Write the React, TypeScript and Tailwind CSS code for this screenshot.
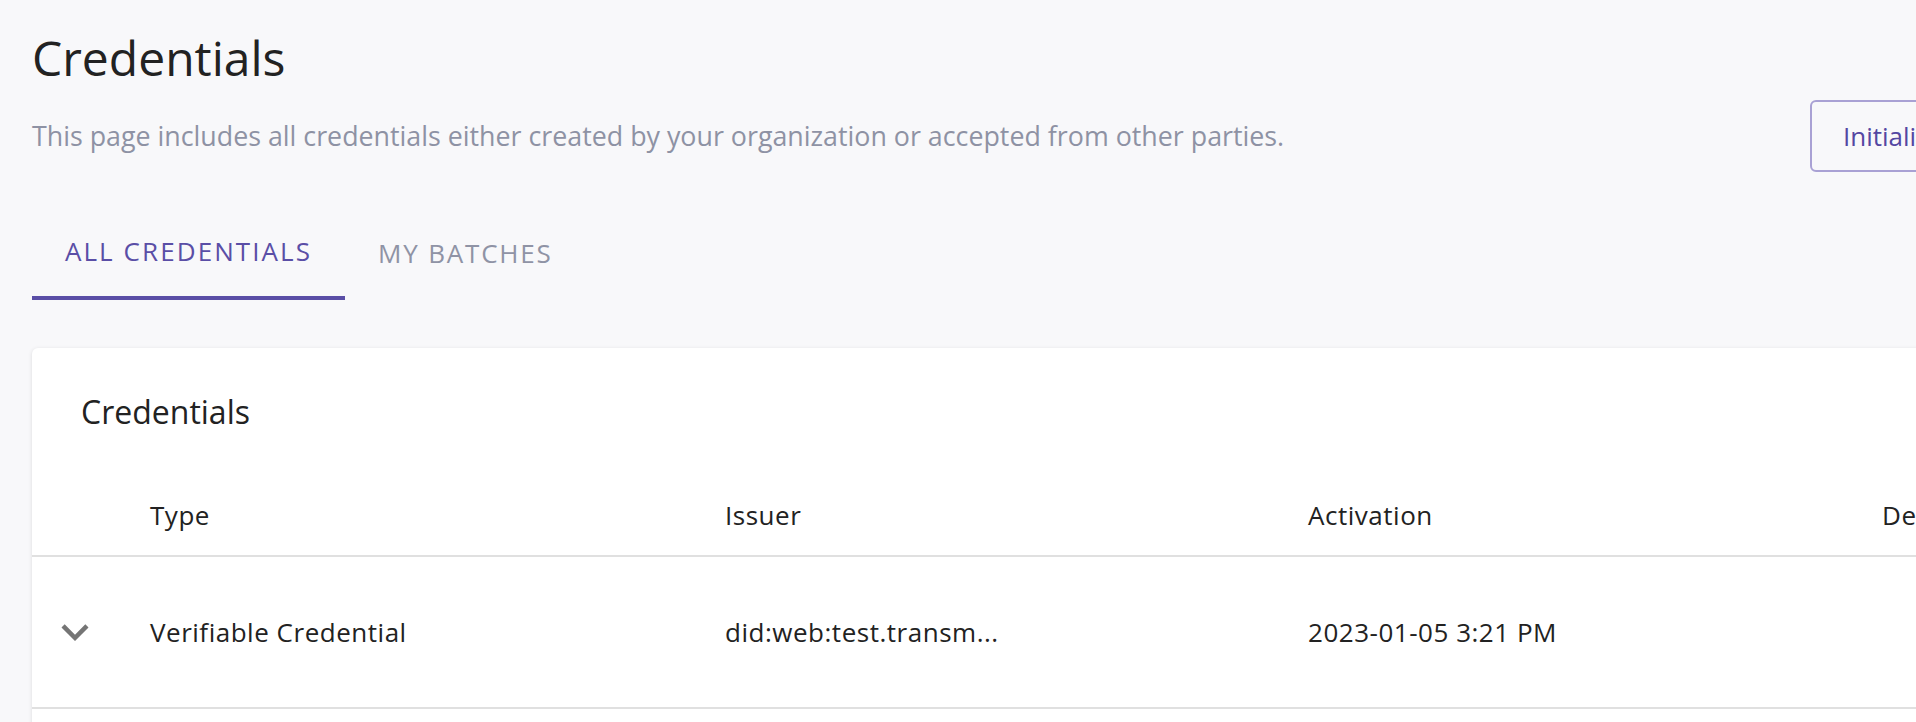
export default function App() {
  const font = { fontFamily: "'Open Sans', 'Noto Sans', sans-serif" };
  return (
    <div className="w-full h-[722px] overflow-hidden bg-[#f8f8fa]" style={font}>
      <div className="w-[2140px] px-[32px]">
        {/* Page header */}
        <h1 className="pt-[30px] h-[86px] text-[48px] leading-[56px] font-normal text-[#222222]">Credentials</h1>
        <div className="mt-[14px] h-[72px] flex items-center">
          <p className="text-[26.8px] leading-[32px] text-[#8e92a4]">
            This page includes all credentials either created by your organization or accepted from other parties.
          </p>
          <button className="ml-auto h-[72px] w-[298px] rounded-[6px] border-2 border-[#a9a1d4] px-[31px] text-left text-[26px] text-[#5447a2]">
            Initialize Batch
          </button>
        </div>

        {/* Tabs */}
        <div className="mt-[34px] flex h-[94px]">
          <div className="flex flex-col w-[313px]">
            <div className="flex-1 flex items-center justify-center text-[26px] tracking-[0.08em] text-[#5a4ea6]">ALL CREDENTIALS</div>
            <div className="h-[4px] bg-[#5a4ea6]" />
          </div>
          <div className="flex flex-col px-[33px]">
            <div className="flex-1 flex items-center text-[26px] tracking-[0.07em] text-[#8f93a5]">MY BATCHES</div>
          </div>
        </div>

        {/* Card */}
        <div className="mt-[48px] bg-white rounded-[6px] shadow-[0_1px_4px_rgba(0,0,0,0.12)] pb-[200px]">
          <div className="h-[127px] flex items-center pl-[49px] text-[32px] font-medium text-[#222222]">Credentials</div>
          <div className="flex h-[82px] items-center border-b-2 border-[#e0e0e0] text-[26px] tracking-[0.02em] text-[#222222]">
            <div className="w-[118px]" />
            <div className="w-[575px]">Type</div>
            <div className="w-[583px]">Issuer</div>
            <div className="w-[574px]">Activation</div>
            <div>Description</div>
          </div>
          <div className="flex h-[152px] items-center border-b-2 border-[#e0e0e0] text-[26px] tracking-[0.02em] text-[#222222]">
            <div className="w-[118px] pl-[16px]">
              <svg viewBox="0 0 24 24" className="w-[54px] h-[54px]" fill="#757575">
                <path d="M16.59 8.59 12 13.17 7.41 8.59 6 10l6 6 6-6z" />
              </svg>
            </div>
            <div className="w-[575px]">Verifiable Credential</div>
            <div className="w-[583px]">did:web:test.transm...</div>
            <div className="w-[574px]">2023-01-05 3:21 PM</div>
            <div />
          </div>
        </div>
      </div>
    </div>
  );
}
